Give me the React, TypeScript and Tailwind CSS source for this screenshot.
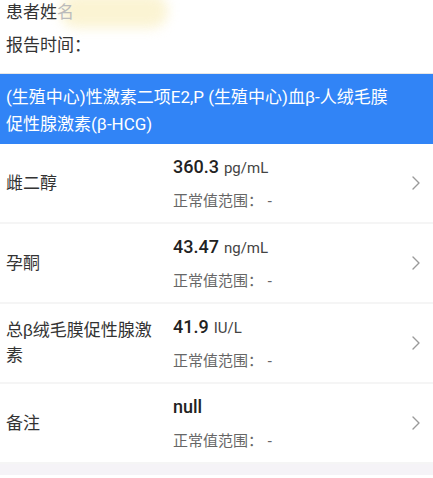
import React from "react";

const font = { fontFamily: '"Liberation Sans", "Noto Sans CJK SC", sans-serif' };
const numFont = { fontFamily: 'Roboto, "Noto Sans CJK SC", sans-serif' };

type Row = { label: string; value: string; unit: string };

const rows: Row[] = [
  { label: "雌二醇", value: "360.3", unit: "pg/mL" },
  { label: "孕酮", value: "43.47", unit: "ng/mL" },
  { label: "总β绒毛膜促性腺激素", value: "41.9", unit: "IU/L" },
  { label: "备注", value: "null", unit: "" },
];

function Chevron() {
  return (
    <svg width="10" height="16" viewBox="0 0 10 16" className="shrink-0">
      <polyline points="2,2 8,8 2,14" fill="none" stroke="#9a9a9a" strokeWidth="1.4" strokeLinecap="round" strokeLinejoin="round" />
    </svg>
  );
}

export default function App() {
  return (
    <div className="w-[433px] h-[478px] bg-white overflow-hidden" style={font}>
      <div className="relative px-[6px] pb-[14px] border-b border-[#e6e6e6]">
        <div className="absolute left-[60px] top-[-6px] w-[108px] h-[34px] rounded-full bg-[#fbf3cf] blur-[6px] opacity-90" />
        <div className="relative text-[17px] leading-[26px] text-[#333]">
          患者姓<span className="text-[#bbb]">名</span>
        </div>
        <div className="mt-[7px] text-[17px] leading-[26px] text-[#333]">报告时间：</div>
      </div>
      <div className="bg-[#3184f6] text-white text-[17px] leading-[27px] pl-[6px] pr-[6px] pt-[10px] pb-[6px]" style={numFont}>
        <div>(生殖中心)性激素二项E2,P (生殖中心)血β-人绒毛膜</div>
        <div>促性腺激素(β-HCG)</div>
      </div>
      {rows.map((r) => (
        <div key={r.label} className="flex items-center h-[80px] border-b-2 border-[#f5f5f5] pl-[6px] pr-[12px]">
          <div className="w-[158px] text-[17px] leading-[25px] text-[#333]">{r.label}</div>
          <div className="flex-1 pl-[9px] flex flex-col gap-[10px]">
            <div className="leading-[24px] text-[#222]" style={numFont}>
              <span className="text-[18px] font-medium">{r.value}</span>
              {r.unit && <span className="text-[15px] text-[#444] ml-[5px]">{r.unit}</span>}
            </div>
            <div className="text-[15px] leading-[22px] text-[#666]">正常值范围： -</div>
          </div>
          <Chevron />
        </div>
      ))}
      <div className="h-[11px] bg-[#f5f3f7]" />
    </div>
  );
}
